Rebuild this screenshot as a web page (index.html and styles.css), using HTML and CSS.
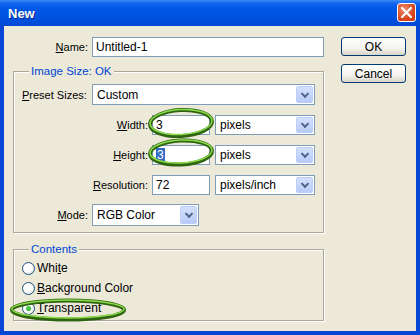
FILE: index.html
```html
<!DOCTYPE html>
<html lang="en">
<head>
  <meta charset="UTF-8" />
  <title>New</title>
  <link rel="stylesheet" href="styles.css">
</head>
<body>
  <div class="window">
    <div class="titlebar">
      <span class="title">New</span>
      <span class="close">
        <svg width="13" height="13" viewBox="0 0 13 13"><path d="M2 2 L11 11 M11 2 L2 11" stroke="#fff" stroke-width="2.2" stroke-linecap="round"/></svg>
      </span>
    </div>

    <div class="client">
      <div class="form">
        <div class="row">
          <label class="lbl lbl-name"><u>N</u>ame:</label>
          <div class="input input-name">Untitled-1</div>
        </div>

        <div class="group group-size">
          <span class="legend">Image Size: OK</span>
          <div class="row row-preset">
            <label class="lbl lbl-preset"><u>P</u>reset Sizes:</label>
            <div class="select select-preset"><span>Custom</span><i class="drop"></i></div>
          </div>
          <div class="row row-dim">
            <label class="lbl lbl-dim"><u>W</u>idth:</label>
            <div class="input input-dim">3</div>
            <div class="select select-unit"><span>pixels</span><i class="drop"></i></div>
          </div>
          <div class="row row-dim">
            <label class="lbl lbl-dim"><u>H</u>eight:</label>
            <div class="input input-dim"><span class="sel-text">3</span></div>
            <div class="select select-unit"><span>pixels</span><i class="drop"></i></div>
          </div>
          <div class="row row-dim">
            <label class="lbl lbl-dim"><u>R</u>esolution:</label>
            <div class="input input-dim">72</div>
            <div class="select select-unit"><span>pixels/inch</span><i class="drop"></i></div>
          </div>
          <div class="row row-mode">
            <label class="lbl lbl-preset lbl-right"><u>M</u>ode:</label>
            <div class="select select-mode"><span>RGB Color</span><i class="drop"></i></div>
          </div>
        </div>

        <div class="group group-contents">
          <span class="legend">Contents</span>
          <div class="radio-row"><i class="radio"></i><span>Whi<u>t</u>e</span></div>
          <div class="radio-row"><i class="radio"></i><span><u>B</u>ackground Color</span></div>
          <div class="radio-row"><i class="radio checked"></i><span><u>T</u>ransparent</span></div>
        </div>
      </div>

      <div class="buttons">
        <button class="btn">OK</button>
        <button class="btn">Cancel</button>
      </div>
    </div>

    <svg class="marks" width="420" height="335" viewBox="0 0 420 335">
      <g fill="none">
        <ellipse cx="181" cy="123" rx="31" ry="13" stroke="#2f6410" stroke-width="4" transform="rotate(-3 181 123)"/>
        <ellipse cx="181" cy="122" rx="31" ry="12.5" stroke="#8bdc4c" stroke-width="1.5" transform="rotate(-3 181 122)"/>
        <ellipse cx="181" cy="152.5" rx="31" ry="12" stroke="#2f6410" stroke-width="4" transform="rotate(-3 181 152.5)"/>
        <ellipse cx="181" cy="151.5" rx="31" ry="11.5" stroke="#8bdc4c" stroke-width="1.5" transform="rotate(-3 181 151.5)"/>
        <ellipse cx="68" cy="310" rx="56" ry="9.5" stroke="#2f6410" stroke-width="4"/>
        <ellipse cx="68" cy="309" rx="56" ry="9" stroke="#8bdc4c" stroke-width="1.5"/>
      </g>
    </svg>
  </div>
</body>
</html>
```

FILE: styles.css
```css
body {
  margin: 0;
  font-family: "Liberation Sans", Arial, sans-serif;
  font-size: 11px;
  color: #000;
}
.window {
  position: relative;
  width: 420px;
  height: 335px;
  box-sizing: border-box;
  background: #0846d6;
  padding: 0 4px 4px;
  display: flex;
  flex-direction: column;
}
.titlebar {
  height: 26px;
  margin: 0 -4px;
  display: flex;
  align-items: center;
  justify-content: space-between;
  padding: 0 4px 0 8px;
  background: linear-gradient(#3d8cf7 0, #1666ee 3px, #0058e6 8px, #0054e3 60%, #0049d4 100%);
}
.title {
  color: #fff;
  font-weight: bold;
  font-size: 13px;
  text-shadow: 1px 1px 0 #0a2a8c;
}
.close {
  width: 19px;
  height: 19px;
  box-sizing: border-box;
  border: 1px solid #fff;
  border-radius: 3px;
  background: radial-gradient(circle at 35% 30%, #f08a6a, #d9471e 60%, #c4340f);
  display: flex;
  align-items: center;
  justify-content: center;
  margin-top: -1px;
}
.client {
  flex: 1;
  background: #ece9d8;
  display: flex;
  padding: 11px 0 0 9px;
}
.form {
  width: 311px;
}
.row {
  display: flex;
  align-items: center;
  gap: 4px;
  height: 20px;
}
.lbl {
  flex: none;
}
.lbl-name {
  width: 75px;
  text-align: right;
}
.input {
  height: 20px;
  box-sizing: border-box;
  border: 1px solid #7f9db9;
  background: #fff;
  padding-left: 3px;
  line-height: 18px;
  font-size: 12px;
}
.input-name {
  width: 233px;
}
.group {
  position: relative;
  box-sizing: border-box;
  border: 1px solid #aca899;
  box-shadow: 1px 1px 0 #fff, inset 1px 1px 0 #fff;
  padding-left: 8px;
}
.legend {
  position: absolute;
  top: -8px;
  left: 15px;
  padding: 0 2px;
  background: #ece9d8;
  color: #0046d5;
  font-size: 11.5px;
  line-height: 14px;
}
.group-size {
  margin-top: 14px;
  height: 162px;
  padding-top: 12px;
}
.row-preset {
  height: 21px;
}
.lbl-preset {
  width: 66px;
}
.lbl-right {
  text-align: right;
}
.row-dim {
  margin-top: 10px;
}
.lbl-dim {
  width: 126px;
  text-align: right;
}
.input-dim {
  width: 58px;
}
.row-dim .select {
  margin-left: 1px;
}
.row-mode {
  margin-top: 9px;
  height: 22px;
}
.select {
  height: 100%;
  box-sizing: border-box;
  border: 1px solid #7f9db9;
  background: #fff;
  display: flex;
  align-items: center;
  justify-content: space-between;
  padding: 1px 1px 1px 4px;
  font-size: 12px;
}
.select-preset {
  width: 223px;
}
.select-unit {
  width: 100px;
}
.select-mode {
  width: 107px;
}
.drop {
  width: 17px;
  align-self: stretch;
  box-sizing: border-box;
  border: 1px solid #bccdf6;
  border-radius: 2px;
  background: linear-gradient(#d4e0fd, #b7cbf8) center / 100% no-repeat;
  position: relative;
}
.drop::after {
  content: '';
  position: absolute;
  left: 50%;
  top: 50%;
  width: 4px;
  height: 4px;
  border-right: 2px solid #4d6185;
  border-bottom: 2px solid #4d6185;
  transform: translate(-50%, -70%) rotate(45deg);
}
.sel-text {
  background: #316ac5;
  color: #fff;
  padding: 0 1px;
}
.group-contents {
  margin-top: 16px;
  height: 72px;
  padding-top: 8px;
}
.radio-row {
  display: flex;
  align-items: center;
  gap: 2px;
  height: 20px;
  font-size: 12px;
}
.radio {
  width: 13px;
  height: 13px;
  box-sizing: border-box;
  border: 1px solid #1c5180;
  border-radius: 50%;
  background: radial-gradient(circle at 40% 40%, #fff 40%, #dcd9cf);
  position: relative;
}
.radio.checked::after {
  content: '';
  position: absolute;
  left: 3px;
  top: 3px;
  width: 5px;
  height: 5px;
  border-radius: 50%;
  background: radial-gradient(circle at 40% 40%, #55d751, #21a121);
}
.buttons {
  margin-left: 17px;
  display: flex;
  flex-direction: column;
  gap: 8px;
}
.btn {
  width: 65px;
  height: 19px;
  box-sizing: border-box;
  border: 1px solid #003c74;
  border-radius: 3px;
  background: linear-gradient(#fff, #f4f3ee 60%, #d9d4c8);
  font-family: "Liberation Sans", Arial, sans-serif;
  font-size: 12px;
  padding: 0;
  color: #000;
}
.marks {
  position: absolute;
  left: 0;
  top: 0;
  pointer-events: none;
}
```
